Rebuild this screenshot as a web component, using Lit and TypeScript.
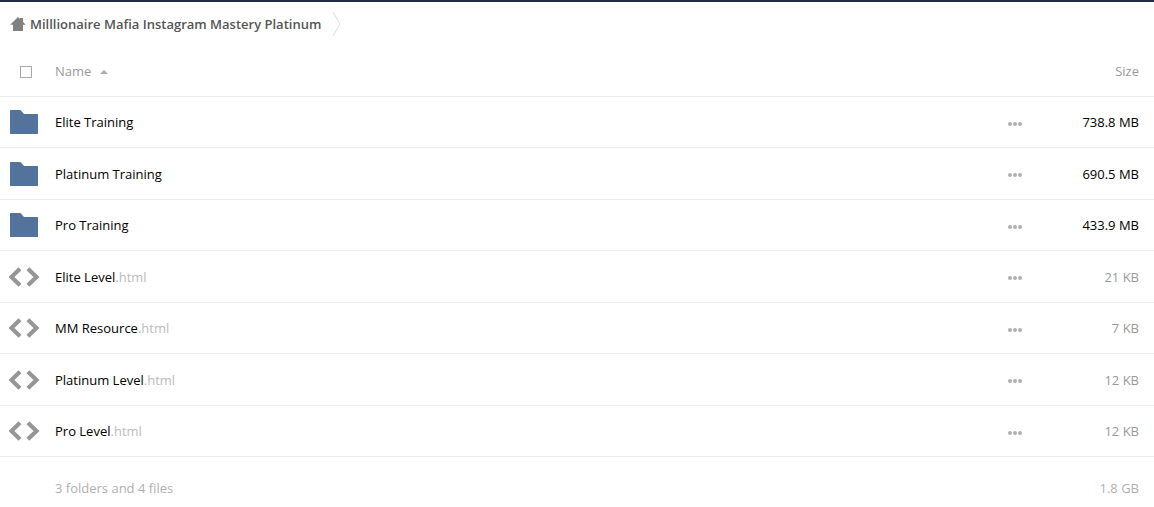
import { LitElement, html, css, svg } from "lit";
import { customElement, state } from "lit/decorators.js";

interface Entry {
  name: string;
  ext?: string;
  size: string;
}

const entries: Entry[] = [
  { name: "Elite Training", size: "738.8 MB" },
  { name: "Platinum Training", size: "690.5 MB" },
  { name: "Pro Training", size: "433.9 MB" },
  { name: "Elite Level", ext: ".html", size: "21 KB" },
  { name: "MM Resource", ext: ".html", size: "7 KB" },
  { name: "Platinum Level", ext: ".html", size: "12 KB" },
  { name: "Pro Level", ext: ".html", size: "12 KB" },
];

const folderShape = svg`<path fill="#54739c" d="M1 3h10.500l3.500 4H28.500q.5 0 .5.5V26.500q0 .5-.5.5H1.500q-.5 0-.5-.5V3.500q0-.5.5-.5z"/>`;
const codeShape = svg`<path fill="none" stroke="#969696" stroke-width="4.200" d="M11 6.700L2.400 15l8.600 8.300M18.900 6.700L27.500 15l-8.600 8.300"/>`;

@customElement("file-row-icon")
class FileRowIcon extends LitElement {
  static properties = { kind: {} };
  declare kind: string;

  static styles = css`
    :host {
      display: block;
    }
    .icon {
      display: block;
      width: 31px;
      height: 30px;
    }
  `;

  render() {
    return html`<svg class="icon" viewBox="0 0 31 30" aria-hidden="true">
      ${this.kind === "folder" ? folderShape : codeShape}
    </svg>`;
  }
}

@customElement("app-root")
class AppRoot extends LitElement {
  @state() private allSelected = false;

  static styles = css`
    :host {
      display: block;
      border-top: 2px solid #1f2d47;
      background: #fff;
      color: #000;
      font: 13px/20px "Open Sans", sans-serif;
    }
    .crumbs {
      display: flex;
      align-items: center;
      height: 44px;
      padding-left: 10px;
    }
    .crumb {
      display: flex;
      align-items: center;
      gap: 4px;
      color: #555;
      font-weight: 600;
      text-decoration: none;
    }
    .home {
      width: 16px;
      height: 16px;
    }
    .chevron {
      width: 9px;
      height: 26px;
      margin-left: 11px;
    }
    .files {
      width: 100%;
      border-spacing: 0;
      table-layout: fixed;
    }
    .col-icon {
      width: 55px;
    }
    .col-menu {
      width: 60px;
    }
    .col-size {
      width: 100px;
    }
    th,
    td {
      box-sizing: border-box;
      height: 51px;
      padding: 0;
      border-bottom: 1px solid #ededed;
      font-weight: 400;
      text-align: left;
      vertical-align: middle;
    }
    .row:nth-child(even) td {
      height: 52px;
    }
    th {
      color: #999;
    }
    .icon-cell {
      padding-left: 9px;
    }
    .check {
      display: block;
      appearance: none;
      box-sizing: border-box;
      width: 12px;
      height: 12px;
      margin: 1px 0 0 20px;
      border: 1px solid #aaa;
      background: #fff;
    }
    .check:checked {
      background: #aaa;
    }
    .sort,
    .more {
      display: flex;
      align-items: center;
      padding: 0;
      border: 0;
      background: none;
      color: inherit;
      font: inherit;
      cursor: pointer;
    }
    .sort {
      gap: 9px;
    }
    .arrow {
      width: 8px;
      height: 4px;
      margin-top: 1px;
    }
    .name {
      color: #000;
      text-decoration: none;
    }
    .ext {
      color: #bbb;
    }
    .more {
      padding: 8px 14px 5px;
    }
    .dots {
      width: 14px;
      height: 4px;
    }
    .size {
      padding-right: 15px;
      text-align: right;
    }
    .light {
      color: #999;
    }
    .total td {
      height: auto;
      padding-top: 21px;
      padding-bottom: 8px;
      border: 0;
      color: #b0b0b0;
    }
  `;

  private row(entry: Entry) {
    return html`<tr class="row">
      <td class="icon-cell">
        <file-row-icon .kind=${entry.ext ? "code" : "folder"}></file-row-icon>
      </td>
      <td>
        <a class="name" href="#">${entry.name}<span class="ext">${entry.ext ?? ""}</span></a>
      </td>
      <td>
        <button class="more" type="button" aria-label="More actions for ${entry.name}">
          <svg class="dots" viewBox="0 0 14 4" fill="#b0b0b0" aria-hidden="true">
            <circle cx="2" cy="2" r="2" />
            <circle cx="7" cy="2" r="2" />
            <circle cx="12" cy="2" r="2" />
          </svg>
        </button>
      </td>
      <td class="size ${entry.ext ? "light" : ""}">${entry.size}</td>
    </tr>`;
  }

  render() {
    return html`
      <nav class="crumbs" aria-label="Breadcrumb">
        <a class="crumb" href="#">
          <svg class="home" viewBox="0 0 16 16" aria-hidden="true">
            <path fill="#808080" d="M8 1l2 2V2h3v4l2.800 2.800H13V15H3V8.800H.2z" />
          </svg>
          <span>Milllionaire Mafia Instagram Mastery Platinum</span>
        </a>
        <svg class="chevron" viewBox="0 0 9 26" aria-hidden="true">
          <path fill="none" stroke="#ddd" d="M1 1l7 12-7 12" />
        </svg>
      </nav>
      <table class="files">
        <colgroup>
          <col class="col-icon" />
          <col />
          <col class="col-menu" />
          <col class="col-size" />
        </colgroup>
        <thead>
          <tr>
            <th>
              <input
                class="check"
                type="checkbox"
                aria-label="Select all"
                .checked=${this.allSelected}
                @change=${(e: Event) => (this.allSelected = (e.target as HTMLInputElement).checked)}
              />
            </th>
            <th aria-sort="ascending">
              <button class="sort" type="button">
                Name
                <svg class="arrow" viewBox="0 0 8 4" aria-hidden="true">
                  <path fill="#aaa" d="M0 4l4-4 4 4z" />
                </svg>
              </button>
            </th>
            <th></th>
            <th class="size">Size</th>
          </tr>
        </thead>
        <tbody>
          ${entries.map((entry) => this.row(entry))}
        </tbody>
        <tfoot>
          <tr class="total">
            <td></td>
            <td>3 folders and 4 files</td>
            <td></td>
            <td class="size">1.8 GB</td>
          </tr>
        </tfoot>
      </table>
    `;
  }
}
